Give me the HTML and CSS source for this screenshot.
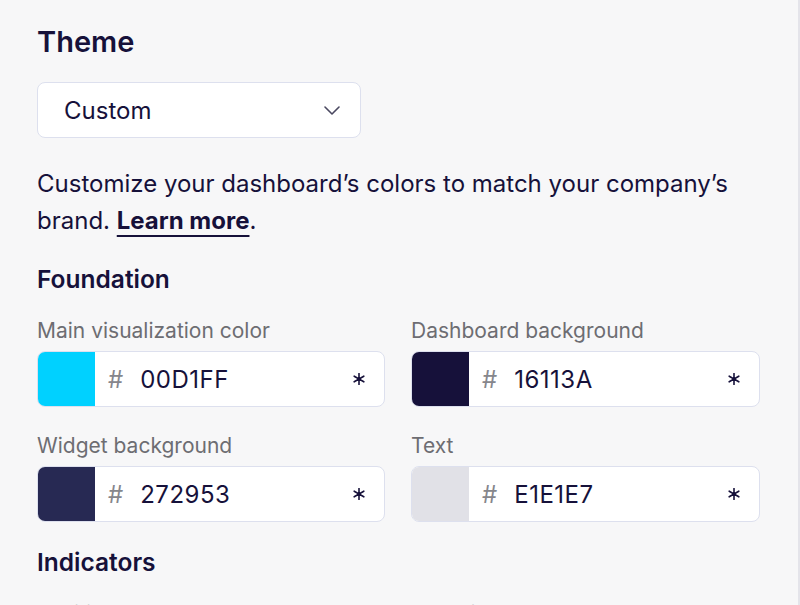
FILE: index.html
```html
<!DOCTYPE html>
<html lang="en">
<head>
  <meta charset="UTF-8">
  <meta name="viewport" content="width=device-width, initial-scale=1.0">
  <title>Theme</title>
  <link rel="stylesheet" href="styles.css">
</head>
<body>

  <div class="panel">
    <h2 class="title">Theme</h2>

    <!-- Theme picker -->
    <div class="select">
      <span>Custom</span>
      <svg class="chevron" viewBox="0 0 16 9" width="16" height="9">
        <polyline points="1,1 8,8 15,1" />
      </svg>
    </div>

    <p class="intro">Customize your dashboard’s colors to match your company’s brand. <a href="#" class="link">Learn more</a>.</p>

    <h3 class="section">Foundation</h3>
    <div class="grid">
      <div class="field">
        <label>Main visualization color</label>
        <div class="color-input">
          <span class="swatch" style="background: #00D1FF"></span>
          <span class="hash">#</span>
          <span class="value">00D1FF</span>
          <svg class="star" viewBox="0 0 12 12" width="12" height="12"><path d="M6 0.5v11M1.2 3.2l9.6 5.6M1.2 8.8l9.6-5.6" /></svg>
        </div>
      </div>
      <div class="field">
        <label>Dashboard background</label>
        <div class="color-input">
          <span class="swatch" style="background: #16113A"></span>
          <span class="hash">#</span>
          <span class="value">16113A</span>
          <svg class="star" viewBox="0 0 12 12" width="12" height="12"><path d="M6 0.5v11M1.2 3.2l9.6 5.6M1.2 8.8l9.6-5.6" /></svg>
        </div>
      </div>
      <div class="field">
        <label>Widget background</label>
        <div class="color-input">
          <span class="swatch" style="background: #272953"></span>
          <span class="hash">#</span>
          <span class="value">272953</span>
          <svg class="star" viewBox="0 0 12 12" width="12" height="12"><path d="M6 0.5v11M1.2 3.2l9.6 5.6M1.2 8.8l9.6-5.6" /></svg>
        </div>
      </div>
      <div class="field">
        <label>Text</label>
        <div class="color-input">
          <span class="swatch" style="background: #E1E1E7"></span>
          <span class="hash">#</span>
          <span class="value">E1E1E7</span>
          <svg class="star" viewBox="0 0 12 12" width="12" height="12"><path d="M6 0.5v11M1.2 3.2l9.6 5.6M1.2 8.8l9.6-5.6" /></svg>
        </div>
      </div>
    </div>

    <h3 class="section">Indicators</h3>
    <div class="grid">
      <div class="field">
        <label>Positive</label>
        <div class="color-input">
          <span class="swatch" style="background: #00B67A"></span>
          <span class="hash">#</span>
          <span class="value">00B67A</span>
        </div>
      </div>
      <div class="field">
        <label>Negative</label>
        <div class="color-input">
          <span class="swatch" style="background: #FF4C5E"></span>
          <span class="hash">#</span>
          <span class="value">FF4C5E</span>
        </div>
      </div>
    </div>
  </div>

</body>
</html>
```

FILE: styles.css
```css
body {
  margin: 0;
  padding: 0;
  height: 100vh;
  background-color: #f7f7f8;
  font-family: Inter, "Liberation Sans", sans-serif;
  color: #16113a;
  overflow: hidden;
}

.panel {
  box-sizing: border-box;
  height: 100%;
  padding: 24px 40px 0 37px;
  border-right: 2px solid #e4e4ea;
}

.title {
  margin: 0;
  font-size: 29px;
  line-height: 36px;
  font-weight: 600;
}

.select {
  box-sizing: border-box;
  width: 324px;
  height: 56px;
  margin-top: 22px;
  padding: 0 20px 0 26px;
  display: flex;
  align-items: center;
  justify-content: space-between;
  background: white;
  border: 1px solid #dde0ee;
  border-radius: 8px;
  font-size: 24px;
}

.chevron polyline {
  fill: none;
  stroke: #4a4860;
  stroke-width: 1.6;
  stroke-linecap: round;
  stroke-linejoin: round;
}

.intro {
  margin: 27px 0 0;
  font-size: 24px;
  line-height: 37px;
}

.link {
  color: inherit;
  font-weight: 700;
  text-decoration: underline;
  text-decoration-thickness: 2px;
  text-underline-offset: 6px;
}

.section {
  margin: 25px 0 0;
  font-size: 24.5px;
  line-height: 30px;
  font-weight: 600;
}

.grid {
  margin-top: 25px;
  display: grid;
  grid-template-columns: 348px 349px;
  column-gap: 26px;
  row-gap: 27px;
}

.field label {
  display: block;
  font-size: 21px;
  line-height: 24px;
  color: #6d6d72;
}

.color-input {
  box-sizing: border-box;
  height: 56px;
  margin-top: 8px;
  display: flex;
  align-items: center;
  background: white;
  border: 1px solid #dde0ee;
  border-radius: 8px;
  overflow: hidden;
}

.swatch {
  align-self: stretch;
  width: 57px;
}

.hash {
  margin-left: 13px;
  font-size: 24px;
  color: #86868c;
}

.value {
  flex: 1;
  margin-left: 17px;
  font-size: 24px;
  letter-spacing: 0.5px;
}

.star {
  margin-right: 19px;
}

.star path {
  fill: none;
  stroke: #16113a;
  stroke-width: 1.6;
  stroke-linecap: round;
}
```
